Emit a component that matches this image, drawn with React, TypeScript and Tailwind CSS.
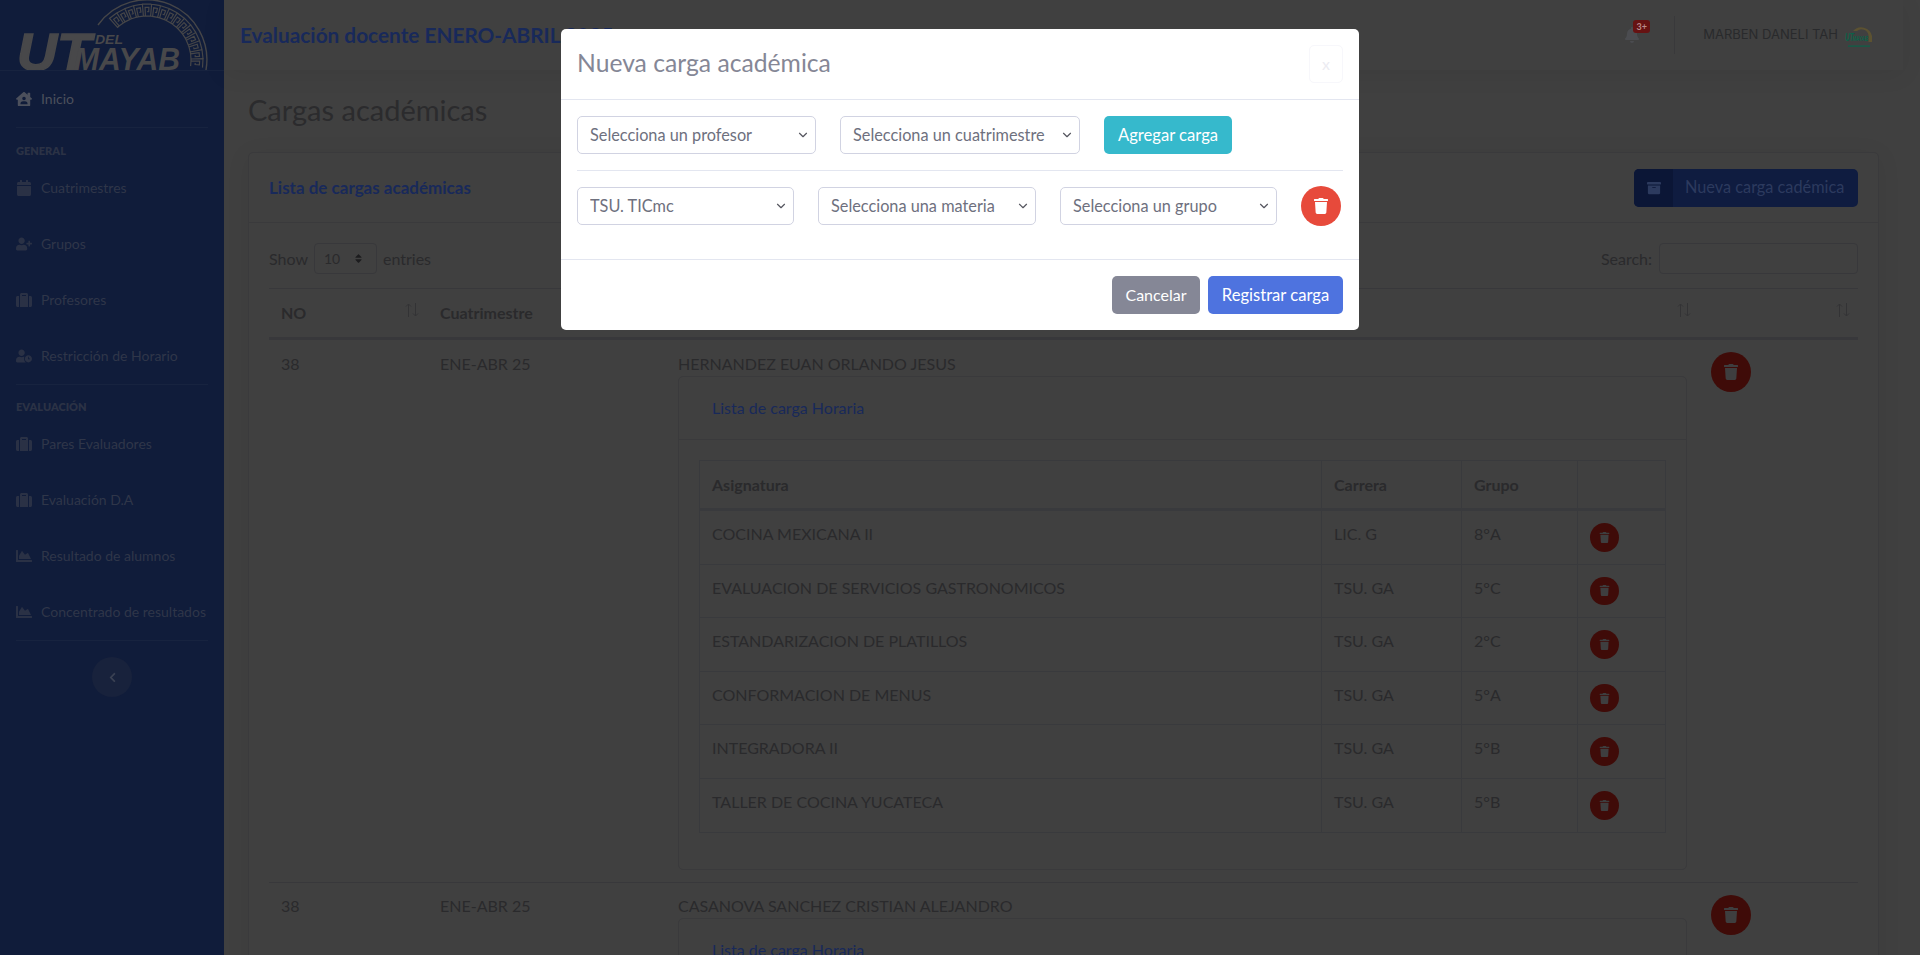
import type { ReactNode } from 'react'
import { ChevronDown } from 'lucide-react'
import {
  FaArchive,
  FaBell,
  FaCalendar,
  FaChartArea,
  FaChevronLeft,
  FaHouseUser,
  FaSort,
  FaSuitcase,
  FaTrash,
  FaUserClock,
  FaUserPlus,
} from 'react-icons/fa'

// Greek key band of the logo, built in polar coordinates
function meanderPath(cx: number, cy: number, r0: number, r1: number, from: number, to: number, count: number) {
  const step = (to - from) / count
  const pt = (a: number, r: number) => {
    const rad = (a * Math.PI) / 180
    return `${(cx + r * Math.cos(rad)).toFixed(1)} ${(cy - r * Math.sin(rad)).toFixed(1)}`
  }
  const h = r1 - r0
  let d = ''
  for (let i = 0; i < count; i++) {
    const a = from + step * i
    const s = step
    const seq: [number, number][] = [
      [a, r0],
      [a + s * 0.72, r0],
      [a + s * 0.72, r0 + h * 0.72],
      [a + s * 0.28, r0 + h * 0.72],
      [a + s * 0.28, r0 + h * 0.36],
      [a + s * 0.48, r0 + h * 0.36],
    ]
    d += seq.map((p, j) => `${j === 0 ? 'M' : 'L'}${pt(p[0], p[1])}`).join(' ') + ' '
    d += `M${pt(a + s * 0.72, r0)} L${pt(a + s, r0)} L${pt(a + s, r1)} L${pt(a + s * 0.02, r1)} `
  }
  return d
}

function Logo() {
  return (
    <svg viewBox="0 0 192 70" className="h-[70px] w-[192px]">
      <path d="M190 70 A60 60 0 0 0 82 25" fill="none" stroke="#464648" strokeWidth="1.4" />
      <path d={meanderPath(131, 60, 44, 56, -8, 132, 15)} fill="none" stroke="#464648" strokeWidth="1.2" />
      <g fill="#48484a" fontFamily="'Liberation Sans', sans-serif" fontWeight="700" fontStyle="italic">
        <text x="1" y="70" fontSize="52" textLength="74" lengthAdjust="spacingAndGlyphs" stroke="#48484a" strokeWidth="1.5">UT</text>
        <text x="58" y="70" fontSize="32" textLength="106" lengthAdjust="spacingAndGlyphs">MAYAB</text>
        <text x="79" y="44" fontSize="13" textLength="28" lengthAdjust="spacingAndGlyphs">DEL</text>
      </g>
    </svg>
  )
}

function AvatarLogo() {
  return (
    <svg viewBox="0 0 28 26" className="h-[26px] w-[28px]">
      <path d="M8 9 A11 11 0 0 1 27 14 L27 20 L23.5 20 L23.5 13 A7 7 0 0 0 12 9 Z" fill="#5c5231" />
      <g fill="#0a6248" fontFamily="'Liberation Sans', sans-serif" fontWeight="700" fontStyle="italic">
        <text x="0" y="19" fontSize="11" textLength="9" lengthAdjust="spacingAndGlyphs">UT</text>
        <text x="8" y="19" fontSize="7" textLength="15" lengthAdjust="spacingAndGlyphs">MAYAB</text>
      </g>
      <rect x="3" y="23.5" width="22" height="1.2" fill="#0a6248" />
    </svg>
  )
}

function NavItem({ icon, label, active }: { icon: ReactNode; label: string; active?: boolean }) {
  return (
    <div className={`flex h-14 items-center px-4 text-sm ${active ? 'text-[#4c505c]' : 'text-[#2f3649]'}`}>
      <span className={`flex w-[25px] shrink-0 text-base ${active ? 'text-[#4c505c]' : 'text-[#2a3145]'}`}>{icon}</span>
      {label}
    </div>
  )
}

function Sidebar() {
  return (
    <aside className="w-56 shrink-0 bg-[#101c3a]">
      <div className="flex h-[71px] justify-center border-b border-[#17233f]">
        <Logo />
      </div>
      <NavItem active icon={<FaHouseUser />} label="Inicio" />
      <div className="mx-4 border-t border-[#17233f]" />
      <div className="flex h-8 items-end px-4 pb-px text-[11px] font-extrabold text-[#2b3245]">GENERAL</div>
      <NavItem icon={<FaCalendar />} label="Cuatrimestres" />
      <NavItem icon={<FaUserPlus />} label="Grupos" />
      <NavItem icon={<FaSuitcase />} label="Profesores" />
      <NavItem icon={<FaUserClock />} label="Restricción de Horario" />
      <div className="mx-4 border-t border-[#17233f]" />
      <div className="flex h-[31px] items-end px-4 pb-px text-[11px] font-extrabold text-[#2b3245]">EVALUACIÓN</div>
      <NavItem icon={<FaSuitcase />} label="Pares Evaluadores" />
      <NavItem icon={<FaSuitcase />} label="Evaluación D.A" />
      <NavItem icon={<FaChartArea />} label="Resultado de alumnos" />
      <NavItem icon={<FaChartArea />} label="Concentrado de resultados" />
      <div className="mx-4 border-t border-[#17233f]" />
      <div className="mt-4 flex justify-center">
        <div className="flex h-10 w-10 items-center justify-center rounded-full bg-[#18223c] text-[11px] text-[#3a4153]">
          <FaChevronLeft />
        </div>
      </div>
    </aside>
  )
}

function Topbar() {
  return (
    <header className="flex h-[70px] shrink-0 items-center bg-[#404040] pl-4 pr-[30px] shadow-[0_4px_24px_rgba(0,0,0,0.07)]">
      <h1 className="whitespace-nowrap text-[20.8px] font-bold text-[#18295a]">Evaluación docente ENERO-ABRIL 2025</h1>
      <div className="ml-auto flex h-[38px] items-center">
        <div className="relative mr-[34px] text-base text-[#4b4c50]">
          <FaBell />
          <span className="absolute -right-[10px] -top-[7px] flex h-[13px] w-[17px] items-center justify-center rounded-[3px] bg-[#661212] text-[9px] font-bold text-[#b98a8a]">
            3+
          </span>
        </div>
        <div className="h-full border-l border-[#39393b]" />
        <span className="ml-[28px] font-['Inter',sans-serif] text-[13px] text-[#292a2c]">MARBEN DANELI TAH</span>
        <span className="ml-[7px]">
          <AvatarLogo />
        </span>
      </div>
    </header>
  )
}

function TrashButton({ small }: { small?: boolean }) {
  if (small) {
    return (
      <div className="flex h-[28.6px] w-[29px] items-center justify-center rounded-full bg-[#3f0b08] text-[11px] text-[#3e3e3f]">
        <FaTrash />
      </div>
    )
  }
  return (
    <div className="flex h-10 w-10 items-center justify-center rounded-full bg-[#3f0b08] text-base text-[#3e3e3f]">
      <FaTrash />
    </div>
  )
}

function SortMark({ right }: { right: string }) {
  return (
    <svg viewBox="0 0 14 16" className={`absolute top-[13px] h-4 w-[14px] ${right}`} fill="none" stroke="#333335" strokeWidth="1">
      <path d="M3.5 15V2M1 4.5L3.5 2L6 4.5" />
      <path d="M10.5 1V14M8 11.5L10.5 14L13 11.5" />
    </svg>
  )
}

const loadRows = [
  { subject: 'COCINA MEXICANA II', career: 'LIC. G', group: '8°A' },
  { subject: 'EVALUACION DE SERVICIOS GASTRONOMICOS', career: 'TSU. GA', group: '5°C' },
  { subject: 'ESTANDARIZACION DE PLATILLOS', career: 'TSU. GA', group: '2°C' },
  { subject: 'CONFORMACION DE MENUS', career: 'TSU. GA', group: '5°A' },
  { subject: 'INTEGRADORA II', career: 'TSU. GA', group: '5°B' },
  { subject: 'TALLER DE COCINA YUCATECA', career: 'TSU. GA', group: '5°B' },
]

function LoadCard({ rows }: { rows: typeof loadRows }) {
  return (
    <div className="rounded-[5px] border border-[#3a3a3c]">
      <div className="border-b border-[#3a3a3c] px-[33px] py-[19px] leading-6 text-[#18295a]">Lista de carga Horaria</div>
      {rows.length > 0 && (
        <div className="p-5 pb-[36px] pl-[20px]">
          <table className="w-full table-fixed border-collapse text-left">
            <colgroup>
              <col />
              <col className="w-[140px]" />
              <col className="w-[116px]" />
              <col className="w-[88px]" />
            </colgroup>
            <thead>
              <tr className="border border-b-[3px] border-[#393a3d] font-bold text-[#2a2a2c]">
                <th className="border border-b-[3px] border-[#393a3d] p-3 pb-[11px] font-bold">Asignatura</th>
                <th className="border border-b-[3px] border-[#393a3d] p-3 pb-[11px] font-bold">Carrera</th>
                <th className="border border-b-[3px] border-[#393a3d] p-3 pb-[11px] font-bold">Grupo</th>
                <th className="border border-b-[3px] border-[#393a3d] p-3 pb-[11px]" />
              </tr>
            </thead>
            <tbody>
              {rows.map((row) => (
                <tr key={row.subject}>
                  <td className="border border-[#393a3d] p-3 pt-[11px] align-top">{row.subject}</td>
                  <td className="border border-[#393a3d] p-3 pt-[11px] align-top">{row.career}</td>
                  <td className="border border-[#393a3d] p-3 pt-[11px] align-top">{row.group}</td>
                  <td className="border border-[#393a3d] p-3 pt-[12px] align-top"><TrashButton small /></td>
                </tr>
              ))}
            </tbody>
          </table>
        </div>
      )}
    </div>
  )
}

function Content() {
  return (
    <main className="min-h-0 flex-1 overflow-hidden px-6 pt-[23px]">
      <h2 className="mb-[25px] text-[29px] leading-[34px] text-[#2b2b2d]">Cargas académicas</h2>
      <section className="rounded-[5px] border border-[#3a3a3c] shadow-[0_4px_24px_rgba(0,0,0,0.07)]">
        <div className="flex h-[70px] items-center justify-between border-b border-[#3a3a3c] px-5">
          <span className="text-[17px] font-bold text-[#18295a]">Lista de cargas académicas</span>
          <div className="flex h-[38px] w-[224px] items-center overflow-hidden rounded-[5px] bg-[#0f1c40] text-[#2c3a5e]">
            <span className="flex h-full w-[39px] items-center justify-center bg-[#0b1636] text-sm">
              <FaArchive />
            </span>
            <span className="ml-3 text-[16.3px]">Nueva carga cadémica</span>
          </div>
        </div>
        <div className="px-5 pt-5">
          <div className="flex items-center justify-between pb-[14px]">
            <div className="flex items-center gap-[6px]">
              Show
              <span className="flex h-[31px] w-[63px] items-center justify-between rounded-[4px] border border-[#38383b] pl-[9px] pr-[12px] text-sm">
                10
                <FaSort className="text-[11px] text-[#1c1c1e]" />
              </span>
              entries
            </div>
            <div className="flex items-center gap-[7px]">
              Search:
              <span className="h-[31px] w-[199px] rounded-[4px] border border-[#38383b]" />
            </div>
          </div>
          <table className="w-full table-fixed border-collapse text-left">
            <colgroup>
              <col className="w-[159px]" />
              <col className="w-[238px]" />
              <col />
              <col className="w-[159px]" />
            </colgroup>
            <thead>
              <tr className="border-y border-b-[3px] border-y-[#38383b]">
                <th className="relative h-[50px] px-3 pt-3 align-top font-bold">NO<SortMark right="right-[9px]" /></th>
                <th className="relative px-3 pt-3 align-top font-bold">Cuatrimestre<SortMark right="right-[8px]" /></th>
                <th className="relative px-3 pt-3 align-top font-bold"><SortMark right="right-[8px]" /></th>
                <th className="relative px-3 pt-3 align-top font-bold"><SortMark right="right-[8px]" /></th>
              </tr>
            </thead>
            <tbody>
              <tr className="border-b border-[#38383b]">
                <td className="p-3 align-top">38</td>
                <td className="p-3 align-top">ENE-ABR 25</td>
                <td className="p-3 align-top">
                  HERNANDEZ EUAN ORLANDO JESUS
                  <LoadCard rows={loadRows} />
                </td>
                <td className="p-3 align-top"><TrashButton /></td>
              </tr>
              <tr>
                <td className="p-3 pt-[11px] align-top">38</td>
                <td className="p-3 pt-[11px] align-top">ENE-ABR 25</td>
                <td className="p-3 pt-[11px] align-top">
                  CASANOVA SANCHEZ CRISTIAN ALEJANDRO
                  <LoadCard rows={[]} />
                </td>
                <td className="p-3 align-top"><TrashButton /></td>
              </tr>
            </tbody>
          </table>
        </div>
      </section>
    </main>
  )
}

function Select({ label, width }: { label: string; width: string }) {
  return (
    <div className={`relative ${width}`}>
      <select
        className="h-[38px] w-full appearance-none rounded-[5px] border border-[#d1d3e2] bg-white pl-3 pr-6 text-[16.3px] text-[#6e707e]"
        defaultValue="a"
      >
        <option value="a">{label}</option>
      </select>
      <ChevronDown className="absolute right-[6px] top-[12px] h-[14px] w-[14px] text-[#55565f]" strokeWidth={2} />
    </div>
  )
}

function Modal() {
  return (
    <div className="fixed inset-0 flex justify-center pt-[29px]">
      <div className="h-[301px] w-[798px] rounded-[5px] bg-white text-[#858796]">
        <div className="flex h-[71px] items-start justify-between border-b border-[#e3e6f0] px-4 pt-4">
          <h3 className="text-[24.7px] leading-9">Nueva carga académica</h3>
          <button className="flex h-[38px] w-[34px] items-center justify-center rounded-[5px] border border-[#f7f7fb] text-[#ececf2]">x</button>
        </div>
        <div className="h-[159px] px-4 pt-4">
          <div className="flex items-center gap-6 pb-4">
            <Select label="Selecciona un profesor" width="w-[239px]" />
            <Select label="Selecciona un cuatrimestre" width="w-[240px]" />
            <button className="h-[38px] w-[128px] rounded-[5px] bg-[#36b9cc] text-[16.6px] text-white">Agregar carga</button>
          </div>
          <div className="flex items-center gap-6 border-t border-[#e3e6f0] pt-[15px]">
            <Select label="TSU. TICmc" width="w-[217px]" />
            <Select label="Selecciona una materia" width="w-[218px]" />
            <Select label="Selecciona un grupo" width="w-[217px]" />
            <button className="flex h-10 w-10 items-center justify-center rounded-full bg-[#e74a3b] text-base text-white"><FaTrash /></button>
          </div>
        </div>
        <div className="flex h-[71px] items-center justify-end gap-2 border-t border-[#e3e6f0] px-4">
          <button className="h-[38px] w-[88px] rounded-[5px] bg-[#858796] text-white">Cancelar</button>
          <button className="h-[38px] w-[135px] rounded-[5px] bg-[#4e73df] text-[16.6px] text-white">Registrar carga</button>
        </div>
      </div>
    </div>
  )
}

export default function App() {
  return (
    <div className="flex h-screen overflow-hidden bg-[#404040] font-['Lato',sans-serif] text-base text-[#2a2a2c]">
      <Sidebar />
      <div className="flex min-w-0 flex-1 flex-col pr-[17px]">
        <Topbar />
        <Content />
      </div>
      <Modal />
    </div>
  )
}
